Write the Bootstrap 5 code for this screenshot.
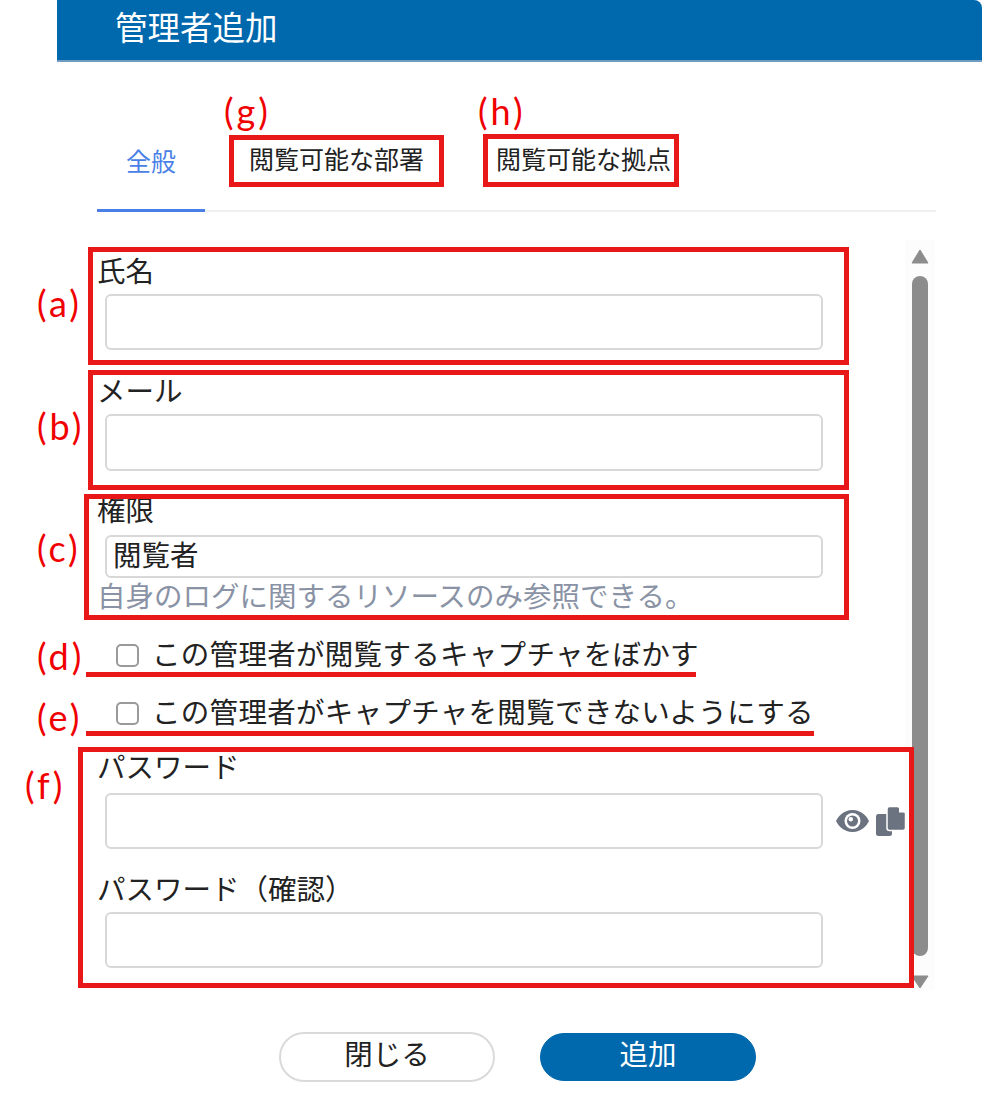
<!DOCTYPE html>
<html lang="ja">
<head>
<meta charset="utf-8">
<title>管理者追加</title>
<link rel="stylesheet" href="https://cdn.jsdelivr.net/npm/bootstrap@5.3.0/dist/css/bootstrap.min.css">
<style>
html,body{background:#fff;height:1103px;overflow:hidden}
body{font-family:"Noto Sans CJK JP","Liberation Sans",sans-serif;color:#222;position:relative;width:982px}
.dlg{margin-left:57px;width:925px}
.dlg-head{height:62px;background:#0068ad;border-top-right-radius:8px;border-bottom:2px solid #6f9cc0;padding:0 0 0 58px;align-items:center}
.dlg-title{font-size:32.500px;line-height:48px;color:#fff;margin:0 0 8px;font-weight:400;white-space:nowrap}
.tabset{margin:0 46px 0 40px;height:150px;border-bottom:2px solid #f0f0f3;align-items:flex-end;flex-wrap:nowrap}
.tabset .nav-link{font-size:25px;line-height:36px;padding:0;border:0;border-radius:0;color:#222;background:none;white-space:nowrap}
.tabset .nav-item{height:76px;padding-top:6px}
.tabset .tab-first{width:108px;text-align:center;border-bottom:3px solid #4a7fe8;margin-bottom:-2px}
.tabset .tab-first .nav-link{color:#4a7fe8}
.tabset .tab-second{width:291px;padding-left:44px}
.dlg-main{margin-left:40px;width:838px;padding-top:28px;align-items:flex-start}
.fields{width:808px;flex:none;padding-top:13px}
.f-label{display:block;font-size:28.500px;line-height:34px;padding-bottom:2px;margin:0;white-space:nowrap}
.f-input.form-control{width:718px;flex:none;margin-left:8px;border:2px solid #d8d8d8;border-radius:6px;height:56px;box-shadow:none;font-size:28.500px;padding:0 6px}
.f-tall.form-control{height:57px}
.f-select.form-control{height:43px;color:#222;padding-bottom:4px}
.f-help{font-size:28.500px;line-height:34px;padding-bottom:2px;color:#8a93a5;white-space:nowrap}
.chk{display:flex;align-items:center;height:36px;padding-left:19px;margin:0;font-size:28.500px;white-space:nowrap}
.chk .form-check-input{width:23px;height:23px;margin:0 13px 0 0;border:2px solid #9a9a9a;border-radius:5px;flex:none}
.chk-text{margin-top:-4px;letter-spacing:.3px}
.gap-a{margin-top:5px}.gap-b{margin-top:23px}.gap-c{margin-top:21px}.gap-d{margin-top:7px}.gap-e{margin-top:22px}.gap-f{margin-top:18px}.gap-g{margin-top:8px}
.pw-icons{gap:7px;margin-left:13px;flex:none}
.pw-icons svg{display:block}
.sbar{width:30px;height:750px;background:#fcfcfc;align-items:center;flex:none}
.sbar-thumb{width:16px;height:680px;background:#8c8c8c;border-radius:8px;margin:12px 0 19px}
.sbar-arrow{display:block;margin-top:9px}
.sbar-arrow.dn{margin-top:0}
.dlg-foot{margin-top:42px;margin-left:222px;gap:45px;align-items:center}
.btn.btn-close-x,.btn.btn-add-x{width:216px;font-size:28.500px;line-height:36px;padding:0 0 8px;border-radius:25px}
.btn.btn-close-x{height:50px;background:#fff;border:2px solid #dadada;color:#222}
.btn.btn-add-x{height:48px;background:#0068ad;border:1px solid #0068ad;color:#fff}
.mk-box{position:absolute;border:5px solid #e81818;pointer-events:none}
.mk-line{position:absolute;height:5px;background:#e81818}
.mk-tag{position:absolute;color:#f00000;font-family:Lato,"Liberation Sans",sans-serif;font-size:36px;line-height:44px;white-space:nowrap;letter-spacing:3px}
</style>
</head>
<body>
<div class="dlg">
  <div class="dlg-head d-flex"><h5 class="dlg-title">管理者追加</h5></div>
  <ul class="nav tabset d-flex">
    <li class="nav-item tab-first"><a class="nav-link" href="#">全般</a></li>
    <li class="nav-item tab-second"><a class="nav-link" href="#">閲覧可能な部署</a></li>
    <li class="nav-item tab-third"><a class="nav-link" href="#">閲覧可能な拠点</a></li>
  </ul>
  <div class="dlg-main d-flex">
    <form class="fields">
      <label class="f-label">氏名</label>
      <input class="form-control f-input gap-a" type="text">
      <label class="f-label gap-b">メール</label>
      <input class="form-control f-input f-tall gap-a" type="text">
      <label class="f-label gap-c">権限</label>
      <div class="form-control f-input f-select gap-d d-flex align-items-center">閲覧者</div>
      <div class="f-help">自身のログに関するリソースのみ参照できる。</div>
      <label class="chk gap-b"><input class="form-check-input" type="checkbox"><span class="chk-text">この管理者が閲覧するキャプチャをぼかす</span></label>
      <label class="chk gap-e"><input class="form-check-input" type="checkbox"><span class="chk-text">この管理者がキャプチャを閲覧できないようにする</span></label>
      <label class="f-label gap-f">パスワード</label>
      <div class="d-flex align-items-center gap-g">
        <input class="form-control f-input" type="password">
        <div class="d-flex align-items-center pw-icons">
          <svg width="33" height="24" viewBox="0 0 33 24"><path fill="#6b7280" d="M16.5 1C26 1 31 8 33 12c-2 4-7 11-16.500 11S2 16 0 12C2 8 7 1 16.500 1Z"/><circle cx="16.500" cy="12" r="8" fill="#fff"/><circle cx="16.500" cy="12" r="5.500" fill="#6b7280"/><circle cx="14.800" cy="10.300" r="2.200" fill="#fff"/></svg>
          <svg width="30" height="29" viewBox="0 0 30 29"><rect x="0" y="7" width="16" height="22" rx="2.500" fill="#6b7280"/><path fill="#6b7280" stroke="#fff" stroke-width="1.500" d="M13.500 -.5h8.500l7.500 6.500v15c0 1.500-1 2.500-2.500 2.500H13.500c-1.500 0-2.500-1-2.500-2.500V2c0-1.500 1-2.500 2.500-2.500Z"/><path fill="#fff" d="M23 .5l5.500 5H23Z"/></svg>
        </div>
      </div>
      <label class="f-label gap-e">パスワード（確認）</label>
      <input class="form-control f-input gap-a" type="password">
    </form>
    <div class="sbar d-flex flex-column">
      <svg class="sbar-arrow" width="18" height="15" viewBox="0 0 18 15"><path fill="#8c8c8c" d="M9 1l8 13H1Z" stroke="#8c8c8c" stroke-linejoin="round"/></svg>
      <div class="sbar-thumb"></div>
      <svg class="sbar-arrow dn" width="18" height="14" viewBox="0 0 18 14"><path fill="#8c8c8c" d="M1 1h16L9 13Z" stroke="#8c8c8c" stroke-linejoin="round"/></svg>
    </div>
  </div>
  <div class="dlg-foot d-flex">
    <button type="button" class="btn btn-close-x">閉じる</button>
    <button type="button" class="btn btn-add-x">追加</button>
  </div>
</div>

<div class="mk-box" style="left:229px;top:135px;width:215px;height:52px"></div>
<div class="mk-box" style="left:483px;top:134px;width:196px;height:53px"></div>
<div class="mk-box" style="left:88px;top:247px;width:761px;height:118px"></div>
<div class="mk-box" style="left:88px;top:370px;width:761px;height:120px"></div>
<div class="mk-box" style="left:84px;top:494px;width:765px;height:126px"></div>
<div class="mk-line" style="left:86px;top:672px;width:610px"></div>
<div class="mk-line" style="left:86px;top:731px;width:728px"></div>
<div class="mk-box" style="left:78px;top:747px;width:836px;height:241px"></div>
<div class="mk-tag" style="left:224px;top:89px">(g)</div>
<div class="mk-tag" style="left:478px;top:89px">(h)</div>
<div class="mk-tag" style="left:37px;top:281px">(a)</div>
<div class="mk-tag" style="left:37px;top:404px">(b)</div>
<div class="mk-tag" style="left:37px;top:526px">(c)</div>
<div class="mk-tag" style="left:37px;top:634px">(d)</div>
<div class="mk-tag" style="left:37px;top:695px">(e)</div>
<div class="mk-tag" style="left:25px;top:763px">(f)</div>
<script src="https://cdn.jsdelivr.net/npm/bootstrap@5.3.0/dist/js/bootstrap.bundle.min.js"></script>
</body>
</html>
